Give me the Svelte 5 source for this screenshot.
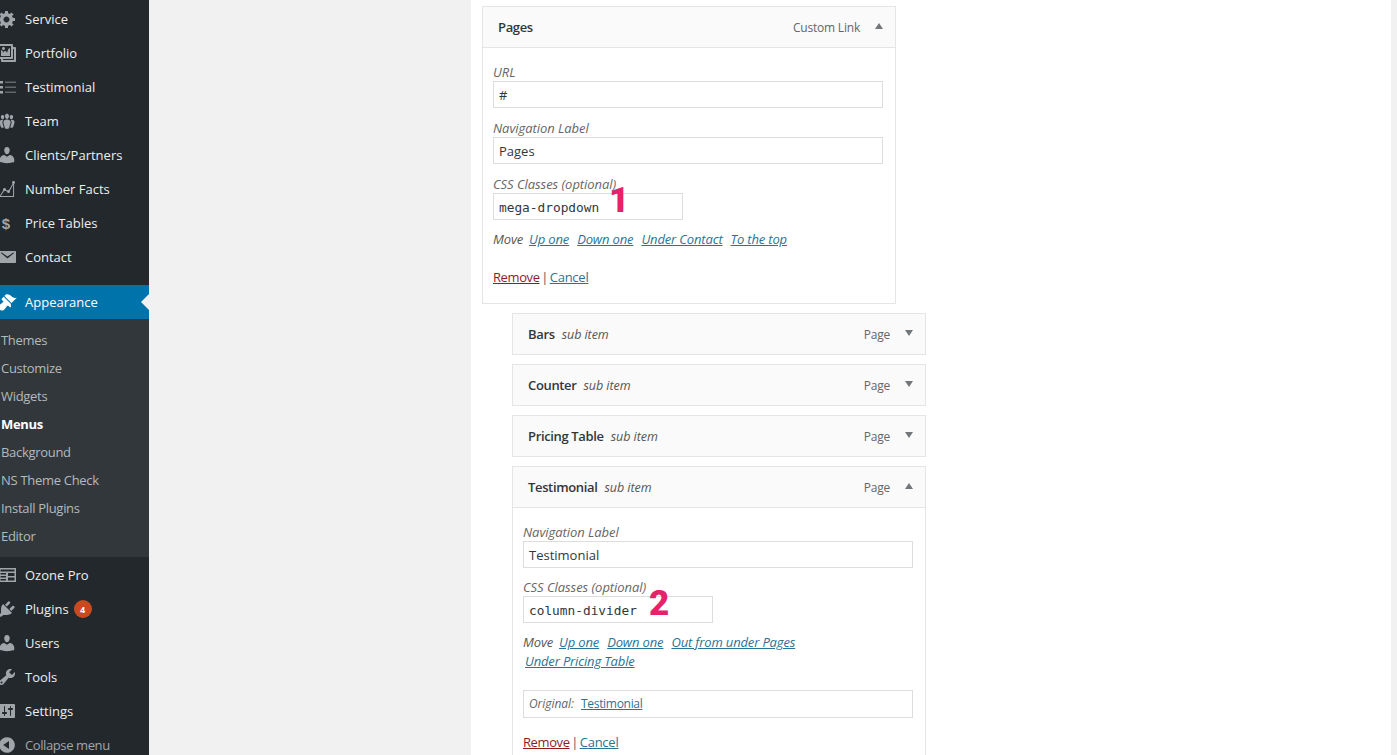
<script>
  const P = {
    gear: "M18 12h-2.18c-.17.7-.44 1.35-.81 1.93l1.54 1.54-2.1 2.1-1.54-1.54c-.58.36-1.23.63-1.91.79V19H8v-2.18c-.68-.16-1.33-.43-1.91-.79l-1.54 1.54-2.12-2.12 1.54-1.54c-.36-.58-.63-1.23-.79-1.91H1V9.03h2.17c.16-.7.44-1.35.8-1.94L2.43 5.55l2.1-2.1 1.54 1.54c.58-.37 1.24-.64 1.93-.81V2h3v2.18c.68.16 1.33.43 1.91.79l1.54-1.54 2.12 2.12-1.54 1.54c.36.59.64 1.24.8 1.94H18V12zm-8.5 1.5c1.66 0 3-1.34 3-3s-1.34-3-3-3-3 1.34-3 3 1.34 3 3 3z",
    gallery: "M16 4h1.96c.57 0 1.04.47 1.04 1.04v12.92c0 .57-.47 1.04-1.04 1.04H5.04C4.47 19 4 18.53 4 17.96V16H2.04C1.47 16 1 15.53 1 14.96V2.04C1 1.47 1.47 1 2.04 1h12.92c.57 0 1.04.47 1.04 1.04V4zM3 14h11V3H3v11zm5-8.5C8 4.67 7.33 4 6.5 4S5 4.67 5 5.5 5.67 7 6.5 7 8 6.33 8 5.5zm2 4.5s1-5 3-5v8H4V7c2 0 2 3 2 3s.33-2 2-2 2 2 2 2zm7 7V6h-1v8.96c0 .57-.47 1.04-1.04 1.04H6v1h11z",
    list: "M3 4h3v2.4H3zM8 4.8h11v.7H8zM3 9h3v2.4H3zM8 9.8h11v.7H8zM3 14h3v2.4H3zM8 14.8h11v.7H8z",
    groups: "M8.03 4.46c-.29 1.28.55 3.46 1.97 3.46 1.41 0 2.25-2.18 1.96-3.46-.22-.98-1.08-1.63-1.96-1.63-.89 0-1.74.65-1.97 1.63zm-4.13.9c-.25 1.08.47 2.93 1.67 2.93s1.92-1.85 1.67-2.93c-.19-.83-.92-1.39-1.67-1.39s-1.48.56-1.67 1.39zm8.86 0c-.25 1.08.47 2.93 1.66 2.93 1.2 0 1.92-1.85 1.67-2.93-.19-.83-.92-1.39-1.67-1.39-.74 0-1.47.56-1.66 1.39zm-.59 11.43l1.25-4.3C14.2 10 12.71 8.47 10 8.47c-2.72 0-4.21 1.53-3.44 4.02l1.26 4.3C8.05 17.51 9 18 10 18c.98 0 1.94-.49 2.17-1.21zm-6.1-7.63c-.49.67-.96 1.83-.42 3.59l1.12 3.79c-.34.2-.77.31-1.2.31-.85 0-1.65-.41-1.85-1.03l-1.07-3.65c-.65-2.11.61-3.4 2.92-3.4.27 0 .54.02.79.06-.1.1-.2.22-.29.33zm8.35-.39c2.31 0 3.58 1.29 2.92 3.4l-1.07 3.65c-.2.62-1 1.03-1.85 1.03-.43 0-.86-.11-1.2-.31l1.11-3.77c.55-1.78.08-2.94-.42-3.61-.08-.11-.18-.23-.28-.33.25-.04.51-.06.79-.06z",
    user: "M10 9.25c-2.27 0-2.73-3.44-2.73-3.44C7 4.02 7.82 2 9.97 2c2.16 0 2.98 2.02 2.71 3.81 0 0-.41 3.44-2.68 3.44zm0 2.57L12.72 10c2.39 0 4.52 2.33 4.52 4.53v2.49s-3.65 1.13-7.24 1.13c-3.65 0-7.24-1.13-7.24-1.13v-2.49c0-2.25 1.94-4.48 4.47-4.48z",
    chart: "M18 3.5c0 .62-.38 1.16-.92 1.38v13.11H1.99l4.22-6.73c-.13-.23-.21-.48-.21-.76C6 9.67 6.67 9 7.5 9S9 9.67 9 10.5c0 .13-.02.25-.05.37l1.44.63c.27-.3.67-.5 1.11-.5.18 0 .35.04.51.09l3.58-6.41c-.36-.27-.59-.7-.59-1.18 0-.83.67-1.5 1.5-1.5.19 0 .36.04.53.1l.05-.09v.11c.54.22.92.76.92 1.38zm-1.92 13.49V5.85l-3.29 5.89c.13.23.21.48.21.76 0 .83-.67 1.5-1.5 1.5s-1.5-.67-1.5-1.5l.01-.07-1.63-.72c-.25.18-.55.29-.88.29-.18 0-.35-.04-.51-.1l-3.2 5.09h12.29z",
    mail: "M3 4h15c.6 0 1 .4 1 1v10c0 .6-.4 1-1 1H3c-.6 0-1-.4-1-1V5c0-.6.4-1 1-1zm.8 2l6.7 5.4L17.2 6l-.9-.6-5.8 4.2-5.8-4.2z",
    brush: "M14.48 11.06L7.41 3.99l1.5-1.5c.5-.56 2.3-.47 3.51.32 1.21.8 1.43 1.28 2.91 2.1 1.18.64 2.45 1.26 4.45.85zm-.71.71L6.7 4.7 4.93 6.47c-.39.39-.39 1.02 0 1.41l1.06 1.06c.39.39.39 1.03 0 1.42-.6.6-1.43 1.11-2.21 1.69-.35.26-.7.53-1.01.84C1.43 13.71 1.08 16.2 2.4 17.6c1.4 1.4 3.9 1 5.2-.4.31-.31.58-.66.84-1.01.58-.78 1.09-1.61 1.69-2.21.39-.39 1.03-.39 1.42 0l1.06 1.06c.39.39 1.02.39 1.41 0z",
    table: "M2 3h17v14H2zM3.5 4.5v2h14v-2zM3.5 8v1.6H9V8zM3.5 11v1.6H9V11zM3.5 14v1.6H9V14zM11 8v3h6.5V8zM11 12.5v3h6.5v-3z",
    plug: "M13.11 4.36L9.87 7.6 8 5.73l3.24-3.24c.35-.34 1.05-.2 1.56.32.52.51.66 1.21.31 1.55zm-8 1.77l.91-1.12 9.01 9.01-1.19.84c-.71.71-2.63 1.16-3.82 1.16H6.14L4.9 17.26c-.59.59-1.54.59-2.12 0-.59-.58-.59-1.53 0-2.12l1.24-1.24v-3.88c0-1.13.4-3.19 1.09-3.89zm7.26 3.97l3.24-3.24c.34-.35 1.04-.21 1.55.31.52.51.66 1.21.31 1.55l-3.24 3.25z",
    tools: "M16.68 9.77c-1.34 1.34-3.3 1.67-4.95.99l-5.41 6.52c-.99.99-2.59.99-3.58 0s-.99-2.59 0-3.57l6.52-5.42c-.68-1.65-.35-3.61.99-4.95 1.28-1.28 3.12-1.62 4.72-1.06l-2.89 2.89 2.82 2.82 2.86-2.87c.53 1.58.18 3.39-1.08 4.65zM3.81 16.21c.4.39 1.04.39 1.43 0 .4-.4.4-1.04 0-1.43-.39-.4-1.03-.4-1.43 0-.39.39-.39 1.03 0 1.43z",
    settings: "M18 16V4c0-.55-.45-1-1-1H3c-.55 0-1 .45-1 1v12c0 .55.45 1 1 1h14c.55 0 1-.45 1-1zM8 11h1c.55 0 1 .45 1 1s-.45 1-1 1H8v1.5c0 .28-.22.5-.5.5s-.5-.22-.5-.5V13H6c-.55 0-1-.45-1-1s.45-1 1-1h1V5.5c0-.28.22-.5.5-.5s.5.22.5.5V11zm5-2h-1c-.55 0-1-.45-1-1s.45-1 1-1h1V5.5c0-.28.22-.5.5-.5s.5.22.5.5V7h1c.55 0 1 .45 1 1s-.45 1-1 1h-1v5.5c0 .28-.22.5-.5.5s-.5-.22-.5-.5V9z",
    collapse: "M10 2.16c4.33 0 7.84 3.51 7.84 7.84s-3.51 7.84-7.84 7.84S2.16 14.33 2.16 10 5.71 2.16 10 2.16zm2 11.72V6.12L6.18 9.97z"
  };
  const top = [
    ["Service", "gear"], ["Portfolio", "gallery"], ["Testimonial", "list"], ["Team", "groups"],
    ["Clients/Partners", "user"], ["Number Facts", "chart"], ["Price Tables", null], ["Contact", "mail"]
  ];
  const subs = ["Themes", "Customize", "Widgets", "Menus", "Background", "NS Theme Check", "Install Plugins", "Editor"];
  const bottom = [["Ozone Pro", "table"], ["Plugins", "plug"], ["Users", "user"], ["Tools", "tools"], ["Settings", "settings"]];
  const closed = [["Bars", "Page"], ["Counter", "Page"], ["Pricing Table", "Page"]];
</script>

{#snippet row(label, icon)}
  <div class="row">
    <span class="ico">
      {#if icon}
        <svg viewBox="0 0 20 20" width="20" height="20"><path fill-rule="evenodd" d={P[icon]} /></svg>
      {:else}
        <span class="dollar">$</span>
      {/if}
    </span>
    <span>{label}</span>
    {#if label === "Plugins"}<span class="badge">4</span>{/if}
  </div>
{/snippet}

<div class="page">
  <nav class="side">
    <div class="group">
      {#each top as [l, i]}{@render row(l, i)}{/each}
    </div>
    <div class="row current">
      <span class="ico"><svg viewBox="0 0 20 20" width="20" height="20"><path d={P.brush} /></svg></span>
      <span>Appearance</span>
      <span class="notch"></span>
    </div>
    <div class="sub">
      {#each subs as s}
        <div class="subrow" class:on={s === "Menus"}>{s}</div>
      {/each}
    </div>
    <div class="group after">
      {#each bottom as [l, i]}{@render row(l, i)}{/each}
      <div class="row collapse">
        <span class="ico"><svg viewBox="0 0 20 20" width="20" height="20"><path d={P.collapse} /></svg></span>
        <span>Collapse menu</span>
      </div>
    </div>
  </nav>

  <main class="gutter">
    <section class="sheet">
      <article class="item">
        <header class="head">
          <span class="title">Pages</span>
          <span class="type">Custom Link</span>
          <span class="caret up"></span>
        </header>
        <div class="body first">
          <div class="lab">URL</div>
          <div class="inp wide">#</div>
          <div class="lab">Navigation Label</div>
          <div class="inp wide">Pages</div>
          <div class="lab">CSS Classes (optional)</div>
          <div class="inp small mono">mega-dropdown<span class="mark one">1</span></div>
          <div class="move"><i>Move</i><a href="#a">Up one</a><a href="#a">Down one</a><a href="#a">Under Contact</a><a href="#a">To the top</a></div>
          <div class="acts"><a class="rm" href="#a">Remove</a> | <a href="#a">Cancel</a></div>
        </div>
      </article>

      {#each closed as [t, k]}
        <article class="item child">
          <header class="head">
            <span class="title">{t}</span><i class="subi">sub item</i>
            <span class="type">{k}</span>
            <span class="caret"></span>
          </header>
        </article>
      {/each}

      <article class="item child open">
        <header class="head">
          <span class="title">Testimonial</span><i class="subi">sub item</i>
          <span class="type">Page</span>
          <span class="caret up"></span>
        </header>
        <div class="body last">
          <div class="lab">Navigation Label</div>
          <div class="inp wide snug">Testimonial</div>
          <div class="lab">CSS Classes (optional)</div>
          <div class="inp small mono">column-divider<span class="mark two">2</span></div>
          <div class="move"><i>Move</i><a href="#a">Up one</a><a href="#a">Down one</a><a href="#a">Out from under Pages</a><br /><a class="nextline" href="#a">Under Pricing Table</a></div>
          <div class="orig"><i>Original:</i><a href="#a">Testimonial</a></div>
          <div class="acts tight"><a class="rm" href="#a">Remove</a> | <a href="#a">Cancel</a></div>
        </div>
      </article>
    </section>
  </main>
</div>

<style>
  :global(body) { margin: 0; background: #f1f1f1; }
  .page {
    display: flex; width: 1397px; height: 755px; overflow: hidden;
    font-family: "Open Sans", "Noto Sans", sans-serif; font-size: 13px; color: #444;
  }
  .side { width: 149px; flex: none; background: #23282d; color: #eee; padding-top: 2px; box-sizing: border-box; }
  .group { display: flex; flex-direction: column; }
  .group.after { margin-top: 1px; }
  .row { position: relative; height: 34px; display: flex; align-items: center; padding-left: 25px; line-height: 1; }
  .ico { position: absolute; left: -3px; top: 7px; width: 20px; height: 20px; display: flex; justify-content: center; align-items: center; }
  .ico svg { fill: #a0a5aa; display: block; }
  .dollar { font-weight: 700; font-size: 15px; color: #a0a5aa; font-family: "Liberation Sans", sans-serif; margin-left: -2px; }
  .badge {
    width: 18px; height: 18px; margin-left: 5px; border-radius: 50%; background: #ca4a1f; color: #fff;
    font-size: 9px; font-weight: 700; display: flex; align-items: center; justify-content: center;
  }
  .current { background: #0073aa; color: #fff; margin-top: 11px; }
  .current .ico svg { fill: #fff; }
  .notch {
    position: absolute; right: 0; top: 9px; border: 8px solid transparent; border-right-color: #f1f1f1; border-left-width: 0;
  }
  .sub { background: #32373c; padding: 7px 0; color: #b4b9be; letter-spacing: -0.3px; }
  .subrow { height: 28px; line-height: 28px; padding-left: 1px; }
  .subrow.on { color: #fff; font-weight: 700; }
  .collapse { color: #a0a5aa; letter-spacing: -0.4px; }

  .gutter { flex: 1; padding: 0 6px 0 322px; min-width: 0; }
  .sheet { background: #fff; height: 100%; padding: 6px 0 0 11px; box-sizing: border-box; letter-spacing: -0.05px; }
  .item { width: 414px; box-sizing: border-box; border: 1px solid #e5e5e5; margin-bottom: 9px; background: #fff; }
  .item.child { margin-left: 30px; }
  .head {
    height: 41px; box-sizing: border-box; background: #fafafa; border-bottom: 1px solid #e5e5e5;
    display: flex; align-items: center; padding: 0 12px 0 15px; position: relative;
  }
  .child .head { height: 40px; border-bottom: 0; }
  .child.open .head { height: 41px; border-bottom: 1px solid #e5e5e5; }
  .title { font-weight: 600; color: #32373c; letter-spacing: -0.35px; }
  .subi { margin-left: 7px; color: #555; font-size: 12.5px; }
  .type { margin-left: auto; margin-right: 15px; color: #666; font-size: 12px; letter-spacing: -0.2px; }
  .caret { width: 0; height: 0; border: 4.5px solid transparent; border-top: 6px solid #72777c; border-bottom: 0; margin-top: -3px; }
  .caret.up { border-top: 0; border-bottom: 6px solid #72777c; }

  .body { padding: 15px 12px 0 10px; }
  .body.first { padding-bottom: 17px; }
  .body.last { padding-bottom: 30px; }
  .lab { height: 18px; line-height: 18px; font-style: italic; color: #666; }
  .inp {
    position: relative; box-sizing: border-box; height: 27px; line-height: 27px; border: 1px solid #ddd; padding-left: 5px;
    margin-bottom: 11px; color: #32373c; background: #fff; letter-spacing: 0;
  }
  .inp.snug { margin-bottom: 10px; }
  .wide { width: 390px; }
  .small { width: 190px; }
  .mono { font-family: "DejaVu Sans Mono", monospace; font-size: 12.8px; letter-spacing: 0; padding-top: 1px; line-height: 26px; }
  .mark { position: absolute; color: #e6226b; font: 900 35px/35px Roboto, sans-serif; }
  .one { left: 115px; top: -11px; }
  .two { left: 125px; top: -11px; }
  a { color: #2a7396; text-decoration: underline; }
  .move { font-style: italic; line-height: 19px; height: 19px; margin-top: -1px; color: #555; letter-spacing: -0.15px; }
  .move a { margin-left: 8px; }
  .move i + a { margin-left: 6px; }
  .move .nextline { margin-left: 2px; }
  .acts { margin-top: 19px; line-height: 18px; color: #555; letter-spacing: -0.25px; word-spacing: -1.5px; }
  .rm { color: #8f1d1d; letter-spacing: -0.4px; }
  .orig {
    box-sizing: border-box; width: 390px; height: 28px; line-height: 26px; border: 1px solid #ddd; margin-top: 38px;
    padding-left: 5px; font-size: 12px; color: #666;
  }
  .orig a { margin-left: 7px; letter-spacing: -0.3px; }
  .acts.tight { margin-top: 15px; }
</style>
